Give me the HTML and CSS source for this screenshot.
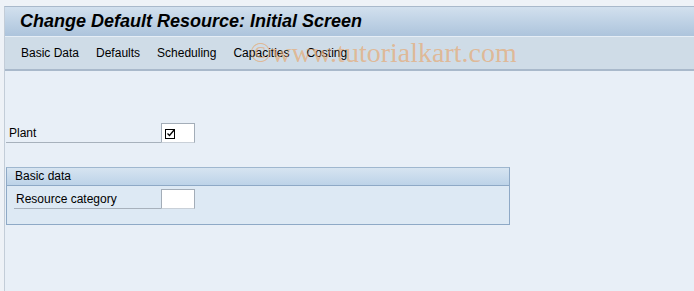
FILE: index.html
```html
<!DOCTYPE html>
<html lang="en">
<head>
<meta charset="UTF-8" />
<title>Change Default Resource: Initial Screen</title>
<link rel="stylesheet" href="styles.css">
</head>
<body>
<div class="window">
  <div class="title-bar">
    <h1 class="title">Change Default Resource: Initial Screen</h1>
  </div>
  <div class="toolbar">
    <span class="tool">Basic Data</span>
    <span class="tool">Defaults</span>
    <span class="tool">Scheduling</span>
    <span class="tool">Capacities</span>
    <span class="tool">Costing</span>
    <span class="watermark">&copy;www.tutorialkart.com</span>
  </div>

  <div class="content">
    <!-- Plant field -->
    <div class="field plant">
      <label class="label">Plant</label>
      <span class="input required">
        <svg width="11" height="11" viewBox="0 0 11 11">
          <rect x="0.5" y="1.5" width="9" height="9" fill="none" stroke="#000" stroke-width="1"/>
          <path d="M2.5 5.5 L4.5 7.5 L9.5 1.5" fill="none" stroke="#000" stroke-width="1.3"/>
        </svg>
      </span>
    </div>

    <!-- Basic data group -->
    <div class="group">
      <div class="group-head">Basic data</div>
      <div class="group-body">
        <div class="field">
          <label class="label">Resource category</label>
          <span class="input"></span>
        </div>
      </div>
    </div>
  </div>
</div>
</body>
</html>
```

FILE: styles.css
```css
:root {
  --page-bg: #e8eff7;
  --top-bg: #eef2f7;
  --bar-line: #a9b9cb;
  --toolbar-bg: #cfdce7;
  --group-line: #8ea9c6;
  --group-body: #dde9f4;
  --text: #000000;
  --font: 'Liberation Sans', Arial, sans-serif;
}

html, body {
  margin: 0;
  height: 100%;
}

body {
  background: var(--top-bg);
  font-family: var(--font);
  color: var(--text);
}

.window {
  margin-top: 6px;
  margin-left: 4px;
  height: 285px;
  border-top: 1px solid var(--bar-line);
  border-left: 1px solid #c3cdd8;
  background: var(--page-bg);
  display: flex;
  flex-direction: column;
}

.title-bar {
  height: 29px;
  background: linear-gradient(to bottom, #d2e0ee 0%, #bfd2e5 50%, #adc4dc 100%);
  border-bottom: 1px solid #e6eef6;
  display: flex;
  align-items: center;
  padding-left: 15px;
}

.title {
  margin: 0;
  font-size: 18px;
  font-weight: bold;
  font-style: italic;
}

.toolbar {
  position: relative;
  height: 32px;
  background: var(--toolbar-bg);
  border-bottom: 2px solid var(--bar-line);
  display: flex;
  align-items: center;
  padding-left: 16px;
  gap: 17px;
  font-size: 12px;
}

.watermark {
  position: absolute;
  left: 245px;
  top: 0;
  font-family: 'Liberation Serif', 'Times New Roman', serif;
  font-size: 28px;
  color: rgba(232, 165, 105, 0.65);
  pointer-events: none;
}

.content {
  padding: 52px 0 0 1px;
}

.field {
  display: flex;
  align-items: flex-end;
  font-size: 12px;
}

.label {
  width: 145px;
  padding: 0 0 1px 2px;
  border-bottom: 1px solid #a7b1bc;
  line-height: 16px;
}

.input {
  width: 34px;
  height: 20px;
  background: #fff;
  border: 1px solid #a3adb8;
  border-bottom-color: #c9d0d8;
  box-sizing: border-box;
  display: flex;
  align-items: center;
  padding-left: 3px;
}

.plant .label {
  width: 152px;
  padding-left: 3px;
}

.group {
  margin-top: 24px;
  width: 502px;
  border: 1px solid var(--group-line);
  border-top-color: #9fb7cf;
  background: var(--group-body);
}

.group-head {
  height: 17px;
  line-height: 17px;
  background: linear-gradient(to bottom, #d6e4f1, #bdd3e8);
  border-bottom: 1px solid var(--group-line);
  padding-left: 8px;
  font-size: 12px;
}

.group-body {
  padding: 3px 0 15px 7px;
}
```
